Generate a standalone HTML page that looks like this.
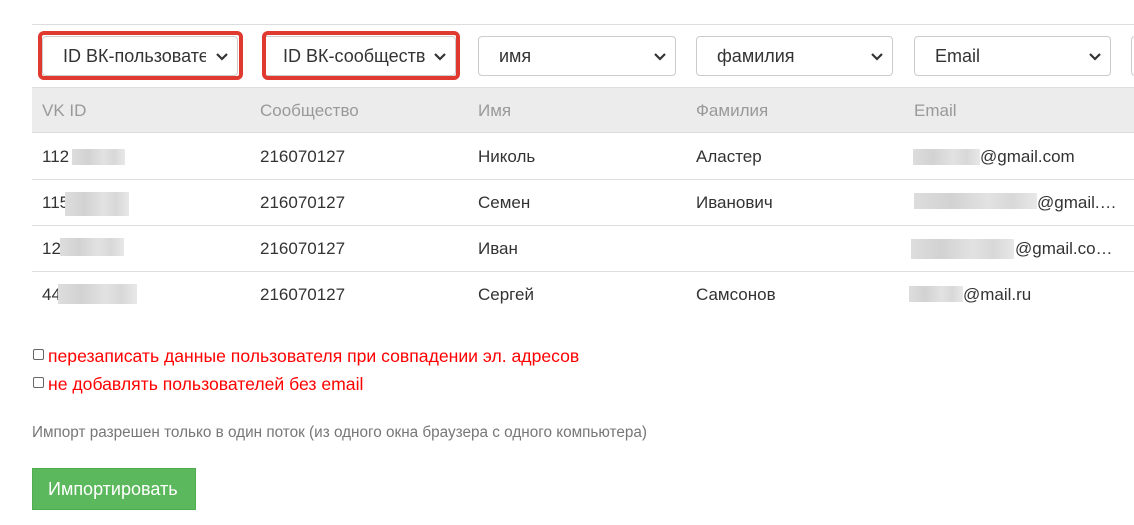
<!DOCTYPE html>
<html><head><meta charset="utf-8"><style>
*{box-sizing:border-box;margin:0;padding:0}
body{width:1134px;height:525px;background:#fff;font-family:"Liberation Sans","DejaVu Sans",sans-serif;color:#333;position:relative;overflow:hidden}
.a{position:absolute}
.sel{position:absolute;top:36px;height:40px;border:1px solid #ccc;border-radius:4px;background:#fff;font-size:18px;padding:9px 0 0 20px;overflow:hidden;white-space:nowrap}
.sel span{display:inline-block;overflow:hidden;vertical-align:top}
.sel svg{position:absolute;right:8px;top:15px}
.red{position:absolute;top:31px;height:49px;border:4px solid #e0392f;border-radius:6px}
.hl{position:absolute;left:32px;width:1102px;height:1px;background:#ddd}
.t{position:absolute;font-size:17px;color:#333;white-space:nowrap}
.h{position:absolute;font-size:17px;color:#999;top:101px}
.blur{position:absolute;height:16px;background:linear-gradient(90deg,#ddd,#d2d2d2 30%,#e2e2e2 60%,#d8d8d8 80%,#e8e8e8)}
</style></head><body>
<div class="hl" style="top:24px"></div>
<div class="sel" style="left:42px;width:196px"><span style="width:143px">ID ВК-пользователя</span><svg width="14" height="10"><path d="M2 2l5 5 5-5" stroke="#333" stroke-width="2.2" fill="none"/></svg></div>
<div class="red" style="left:38px;width:205px"></div>
<div class="sel" style="left:262px;width:194px"><span style="width:142px">ID ВК-сообщества</span><svg width="14" height="10"><path d="M2 2l5 5 5-5" stroke="#333" stroke-width="2.2" fill="none"/></svg></div>
<div class="red" style="left:262px;width:198px"></div>
<div class="sel" style="left:478px;width:198px">имя<svg width="14" height="10"><path d="M2 2l5 5 5-5" stroke="#333" stroke-width="2.2" fill="none"/></svg></div>
<div class="sel" style="left:696px;width:197px">фамилия<svg width="14" height="10"><path d="M2 2l5 5 5-5" stroke="#333" stroke-width="2.2" fill="none"/></svg></div>
<div class="sel" style="left:914px;width:197px">Email<svg width="14" height="10"><path d="M2 2l5 5 5-5" stroke="#333" stroke-width="2.2" fill="none"/></svg></div>
<div class="sel" style="left:1131px;width:40px"></div>
<div class="a" style="left:32px;top:87px;width:1102px;height:46px;background:#ececec;border-top:1px solid #ddd;border-bottom:1px solid #ddd"></div>
<div class="h" style="left:42px">VK ID</div><div class="h" style="left:260px">Сообщество</div><div class="h" style="left:478px">Имя</div><div class="h" style="left:696px">Фамилия</div><div class="h" style="left:914px">Email</div>
<div class="hl" style="top:179px"></div><div class="hl" style="top:225px"></div><div class="hl" style="top:271px"></div>
<div class="t" style="left:42px;top:147px">112</div><div class="blur" style="left:72px;top:149px;width:53px"></div>
<div class="t" style="left:260px;top:147px">216070127</div><div class="t" style="left:478px;top:147px">Николь</div><div class="t" style="left:696px;top:147px">Аластер</div>
<div class="blur" style="left:913px;top:149px;width:67px"></div><div class="t" style="left:980px;top:147px">@gmail.com</div>
<div class="t" style="left:42px;top:193px">115</div><div class="blur" style="left:65px;top:192px;width:64px;height:24px"></div>
<div class="t" style="left:260px;top:193px">216070127</div><div class="t" style="left:478px;top:193px">Семен</div><div class="t" style="left:696px;top:193px">Иванович</div>
<div class="blur" style="left:914px;top:193px;width:123px"></div><div class="t" style="left:1037px;top:193px">@gmail.…</div>
<div class="t" style="left:42px;top:239px">12</div><div class="blur" style="left:60px;top:238px;width:64px;height:18px"></div>
<div class="t" style="left:260px;top:239px">216070127</div><div class="t" style="left:478px;top:239px">Иван</div>
<div class="blur" style="left:911px;top:239px;width:103px;height:20px"></div><div class="t" style="left:1015px;top:239px">@gmail.co…</div>
<div class="t" style="left:42px;top:285px">44</div><div class="blur" style="left:58px;top:284px;width:79px;height:20px"></div>
<div class="t" style="left:260px;top:285px">216070127</div><div class="t" style="left:478px;top:285px">Сергей</div><div class="t" style="left:696px;top:285px">Самсонов</div>
<div class="blur" style="left:909px;top:286px;width:54px"></div><div class="t" style="left:963px;top:285px">@mail.ru</div>
<div class="a" style="left:33px;top:349px;width:11px;height:11px;border:1px solid #666;border-radius:2px"></div>
<div class="t" style="left:48px;top:346px;color:#f00;font-size:17.6px">перезаписать данные пользователя при совпадении эл. адресов</div>
<div class="a" style="left:33px;top:377px;width:11px;height:11px;border:1px solid #666;border-radius:2px"></div>
<div class="t" style="left:48px;top:374px;color:#f00;font-size:17.6px">не добавлять пользователей без email</div>
<div class="t" style="left:32px;top:424px;color:#777;font-size:15.3px">Импорт разрешен только в один поток (из одного окна браузера с одного компьютера)</div>
<div class="a" style="left:32px;top:468px;width:164px;height:42px;background:#5cb85c;border:1px solid #4cae4c;color:#fff;font-size:18px;padding:10px 0 0 15px;white-space:nowrap">Импортировать</div>
</body></html>
